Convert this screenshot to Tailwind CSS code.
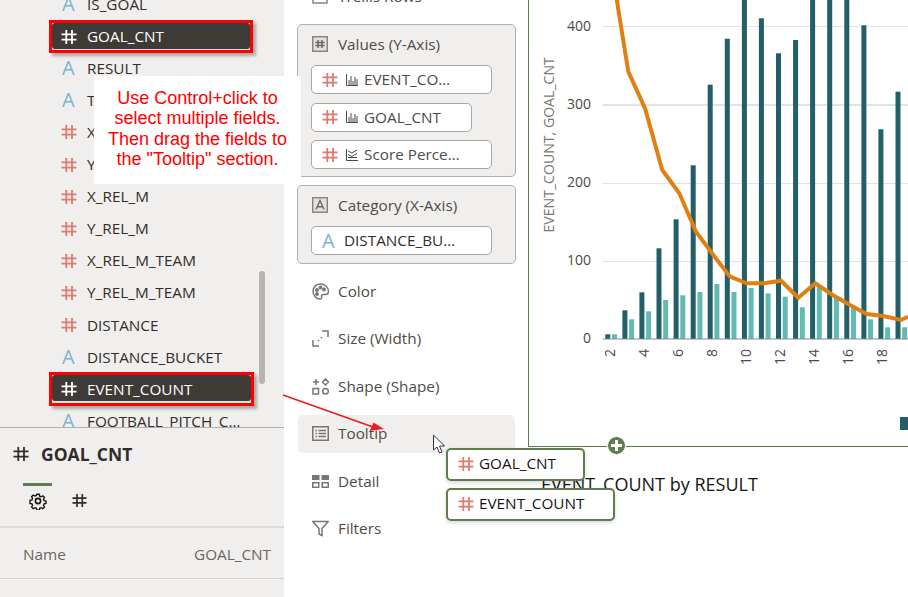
<!DOCTYPE html>
<html>
<head>
<meta charset="utf-8">
<script src="https://cdn.jsdelivr.net/npm/@tailwindcss/browser@4"></script>
</head>
<body class="overflow-hidden bg-white">
<svg width="0" height="0" class="absolute">
  <symbol id="h" viewBox="0 0 16 16"><path d="M5.300 1v14M11 1v14M0.500 5.400h15M0.500 10.600h15" fill="none" stroke="currentColor" stroke-width="1.800"/></symbol>
  <symbol id="bars" viewBox="0 0 12 12"><path d="M0.500 0v11.500h11.500M3 11V6M5 11V2M7 11V7M9 11V3M11 11V5" fill="none" stroke="currentColor" stroke-width="1"/></symbol>
  <symbol id="combo" viewBox="0 0 12 12"><path d="M0.500 0v11.500h11.500M2 2l4 2 5-3M2 5.500l4 2 5-3M2 8.500h9" fill="none" stroke="currentColor" stroke-width="1"/></symbol>
</svg>
<div class="relative flex h-[597px] w-[908px] overflow-hidden font-['Open_Sans',sans-serif] text-[15.300px] text-[#312d2a]">

  <!-- Left data panel -->
  <aside class="flex h-full w-[284px] shrink-0 flex-col bg-[#f1efed]">
    <div class="relative h-[428px] shrink-0 overflow-hidden border-b border-[#b3afab]">
      <ul class="-mt-3">
        <li class="flex h-[32.100px] items-center pl-[61px]"><span class="w-[26px] pl-[1px] text-[20px] leading-none font-normal text-[#7fb2cf]">A</span>IS_GOAL</li>
        <li class="flex h-[32.100px] items-center">
          <div class="ml-[49px] h-[33px] w-[204px] border-3 border-[#ff0000] bg-[#e4e2df] shadow-[3px_3px_3px_rgba(0,0,0,0.3)]">
            <div class="flex h-[26px] items-center rounded-[3px] bg-[#3e3a35] pt-[2px] pl-[9px] text-white"><svg class="mr-[10px] h-[16px] w-[16px] text-white"><use href="#h"/></svg>GOAL_CNT</div>
          </div>
        </li>
        <li class="flex h-[32.100px] items-center pl-[61px]"><span class="w-[26px] pl-[1px] text-[20px] leading-none font-normal text-[#7fb2cf]">A</span>RESULT</li>
        <li class="flex h-[32.100px] items-center pl-[61px]"><span class="w-[26px] pl-[1px] text-[20px] leading-none font-normal text-[#7fb2cf]">A</span>TEAM</li>
        <li class="flex h-[32.100px] items-center pl-[61px]"><svg class="mr-[10px] h-[16px] w-[16px] text-[#e0796b]"><use href="#h"/></svg>X_REL</li>
        <li class="flex h-[32.100px] items-center pl-[61px]"><svg class="mr-[10px] h-[16px] w-[16px] text-[#e0796b]"><use href="#h"/></svg>Y_REL</li>
        <li class="flex h-[32.100px] items-center pl-[61px]"><svg class="mr-[10px] h-[16px] w-[16px] text-[#e0796b]"><use href="#h"/></svg>X_REL_M</li>
        <li class="flex h-[32.100px] items-center pl-[61px]"><svg class="mr-[10px] h-[16px] w-[16px] text-[#e0796b]"><use href="#h"/></svg>Y_REL_M</li>
        <li class="flex h-[32.100px] items-center pl-[61px]"><svg class="mr-[10px] h-[16px] w-[16px] text-[#e0796b]"><use href="#h"/></svg>X_REL_M_TEAM</li>
        <li class="flex h-[32.100px] items-center pl-[61px]"><svg class="mr-[10px] h-[16px] w-[16px] text-[#e0796b]"><use href="#h"/></svg>Y_REL_M_TEAM</li>
        <li class="flex h-[32.100px] items-center pl-[61px]"><svg class="mr-[10px] h-[16px] w-[16px] text-[#e0796b]"><use href="#h"/></svg>DISTANCE</li>
        <li class="flex h-[32.100px] items-center pl-[61px]"><span class="w-[26px] pl-[1px] text-[20px] leading-none font-normal text-[#7fb2cf]">A</span>DISTANCE_BUCKET</li>
        <li class="flex h-[32.100px] items-center">
          <div class="ml-[49px] h-[34px] w-[205px] border-3 border-[#ff0000] bg-[#e4e2df] shadow-[3px_3px_3px_rgba(0,0,0,0.3)]">
            <div class="flex h-[26px] items-center rounded-[3px] bg-[#3e3a35] pt-[2px] pl-[9px] text-white"><svg class="mr-[10px] h-[16px] w-[16px] text-white"><use href="#h"/></svg>EVENT_COUNT</div>
          </div>
        </li>
        <li class="flex h-[32.100px] items-center whitespace-nowrap pl-[61px]"><span class="w-[26px] pl-[1px] text-[20px] leading-none font-normal text-[#7fb2cf]">A</span>FOOTBALL_PITCH_C<span class="tracking-[2px]">…</span></li>
      </ul>
      <div class="absolute top-[271px] left-[259px] h-[113px] w-[6px] rounded-full bg-[#b9b4af]"></div>
    </div>
    <div class="flex h-[44px] items-center pt-[8px] pl-[13px] text-[17.500px] font-bold">
      <svg class="mr-[12px] h-[16px] w-[16px] text-[#312d2a]"><use href="#h"/></svg>GOAL_CNT
    </div>
    <div class="ml-[23px] mt-[11px] h-[3px] w-[29px] bg-[#5f7d4f]"></div>
    <div class="flex h-[42px] items-start border-b-2 border-[#dcd9d6]">
      <svg class="mt-[6px] ml-[29px] h-[18px] w-[18px]" viewBox="0 0 18 18" fill="none" stroke="#161513" stroke-width="1.600"><circle cx="9" cy="9" r="2.600"/><path d="M7.600 1.200h2.800l.5 2.200 1.600.7 2-1.100 1.900 2-1.100 1.900.7 1.600 2.200.5v2.800l-2.200.5-.7 1.600 1.100 2-2 1.900-1.900-1.100-1.600.7-.5 2.200H7.600l-.5-2.200-1.600-.7-2 1.100-1.900-2 1.100-1.900-.7-1.600-2.200-.5V8.100l2.200-.5.7-1.600-1.100-2 2-1.900 1.900 1.100 1.600-.7z" transform="translate(1.200 1.200) scale(.87)"/></svg>
      <svg class="mt-[7px] ml-[25px] h-[15px] w-[15px] text-[#312d2a]"><use href="#h"/></svg>
    </div>
    <div class="flex h-[51px] items-center justify-between border-b border-[#d5d2cf] pt-[3px] pr-[13px] pl-[23px] text-[#6b6660]">
      <span>Name</span><span>GOAL_CNT</span>
    </div>
  </aside>

  <!-- Middle grammar panel -->
  <section class="flex w-[244px] shrink-0 flex-col pl-[13px] pr-[12px] text-[#4f4b47]">
    <div class="-mt-[16px] mb-[16px] flex h-[24px] items-center pl-[15px]">
      <svg class="mr-[10px] h-[16px] w-[16px]" viewBox="0 0 16 16" fill="none" stroke="#8a8580" stroke-width="1.500"><rect x="1" y="1" width="14" height="14"/><path d="M1 8h14"/></svg>Trellis Rows
    </div>
    <div class="flex h-[153px] flex-col rounded-[5px] border border-[#b3afab] bg-[#f1efed] pt-[8px] pl-[13px]">
      <div class="mb-[10px] flex h-[22px] items-center pl-[1px]">
        <svg class="mr-[10px] h-[16px] w-[16px]" viewBox="0 0 16 16" fill="none"><rect x=".75" y=".75" width="14.500" height="14.500" fill="#e4e1de" stroke="#8a8580" stroke-width="1.500"/><path d="M6 4v8M10 4v8M3.500 6.500h9M3.500 9.500h9" stroke="#6b6660" stroke-width="1.400"/></svg>Values (Y-Axis)
      </div>
      <div class="flex flex-col gap-[8.500px]">
        <div class="flex h-[29px] w-[181px] items-center rounded-[5px] border border-[#aaa6a1] bg-white pl-[10px]"><svg class="mr-[8px] h-[16px] w-[16px] text-[#e0796b]"><use href="#h"/></svg><svg class="mr-[6px] h-[12px] w-[12px]"><use href="#bars"/></svg>EVENT_CO…</div>
        <div class="flex h-[29px] w-[161px] items-center rounded-[5px] border border-[#aaa6a1] bg-white pl-[10px]"><svg class="mr-[8px] h-[16px] w-[16px] text-[#e0796b]"><use href="#h"/></svg><svg class="mr-[6px] h-[12px] w-[12px]"><use href="#bars"/></svg>GOAL_CNT</div>
        <div class="flex h-[29px] w-[181px] items-center rounded-[5px] border border-[#aaa6a1] bg-white pl-[10px]"><svg class="mr-[8px] h-[16px] w-[16px] text-[#e0796b]"><use href="#h"/></svg><svg class="mr-[6px] h-[12px] w-[12px]"><use href="#combo"/></svg>Score Perce…</div>
      </div>
    </div>
    <div class="mt-[8px] flex h-[79px] flex-col rounded-[5px] border border-[#b3afab] bg-[#f1efed] pt-[8px] pl-[13px]">
      <div class="mb-[10px] flex h-[22px] items-center pl-[1px]">
        <svg class="mr-[10px] h-[16px] w-[16px]" viewBox="0 0 16 16" fill="none"><rect x=".75" y=".75" width="14.500" height="14.500" fill="#e4e1de" stroke="#8a8580" stroke-width="1.500"/><path d="M4 12.500 8 3.500l4 9M5.300 9.800h5.400" stroke="#6b6660" stroke-width="1.400"/></svg>Category (X-Axis)
      </div>
      <div class="flex h-[29px] w-[181px] items-center rounded-[5px] border border-[#aaa6a1] bg-white pl-[10px] text-[#312d2a]"><span class="w-[22px] text-[20px] leading-none font-normal text-[#7fb2cf]">A</span>DISTANCE_BU…</div>
    </div>
    <div class="mt-[9px] flex flex-col gap-[9.330px] pl-[1px]">
      <div class="flex h-[38px] w-[217px] items-center pb-[1px] pl-[14px]">
        <svg class="mr-[9px] h-[17px] w-[17px]" viewBox="0 0 17 17" fill="none" stroke="#7a7570" stroke-width="1.500"><path d="M8.500 1C4.200 1 1 4.200 1 8.300s3.300 7.700 7 7.700c1.600 0 2-1 1.600-2.200-.4-1.300.2-2.300 1.600-2.300h2.300c1.700 0 3-1.100 3-3C16 4 12.700 1 8.500 1z"/><circle cx="5" cy="7" r="1.200" fill="#7a7570"/><circle cx="8.500" cy="4.500" r="1.200" fill="#7a7570"/><circle cx="12" cy="6.500" r="1.200" fill="#7a7570"/><circle cx="5" cy="11" r="1.200" fill="#7a7570"/></svg>Color
      </div>
      <div class="flex h-[38px] w-[217px] items-center pb-[1px] pl-[14px]">
        <svg class="mr-[9px] h-[17px] w-[17px]" viewBox="0 0 17 17" fill="none" stroke="#7a7570" stroke-width="1.500"><path d="M1 10v6h6M10 1h6v6" /><path d="M6 11l5-5" stroke-dasharray="1.500 2.500"/></svg>Size (Width)
      </div>
      <div class="flex h-[38px] w-[217px] items-center pb-[1px] pl-[14px]">
        <svg class="mr-[9px] h-[17px] w-[17px]" viewBox="0 0 17 17" fill="none" stroke="#7a7570" stroke-width="1.500"><path d="M1 4h6M4 1v6M13.500 1l3 3-3 3-3-3z"/><rect x="1" y="10.500" width="5.500" height="5.500"/><circle cx="13.500" cy="13.200" r="2.800"/></svg>Shape (Shape)
      </div>
      <div class="flex h-[38px] w-[217px] items-center rounded-[5px] bg-[#f1efed] pb-[1px] pl-[14px]">
        <svg class="mr-[9px] h-[17px] w-[17px]" viewBox="0 0 17 17" fill="none" stroke="#7a7570" stroke-width="1.500"><rect x=".75" y="1.750" width="15.500" height="13.500"/><path d="M3.500 5.500h1.500M6.500 5.500h7.500M3.500 8.500h1.500M6.500 8.500h7.500M3.500 11.500h1.500M6.500 11.500h7.500"/></svg>Tooltip
      </div>
      <div class="flex h-[38px] w-[217px] items-center pl-[14px]">
        <svg class="mr-[9px] h-[17px] w-[17px]" viewBox="0 0 17 17"><path d="M0 2h7.500v5H0zM9.500 2H17v5H9.500z" fill="#7a7570"/><path d="M.75 9.750h6v4.500h-6zM10.250 9.750h6v4.500h-6z" fill="none" stroke="#7a7570" stroke-width="1.500"/></svg>Detail
      </div>
      <div class="flex h-[38px] w-[217px] items-center pb-[1px] pl-[14px]">
        <svg class="mr-[9px] h-[17px] w-[17px]" viewBox="0 0 17 17" fill="none" stroke="#7a7570" stroke-width="1.500"><path d="M.75 1.500h15.500L10 8.500v7l-3-1.500V8.500z"/></svg>Filters
      </div>
    </div>
  </section>

  <!-- Chart canvas -->
  <section class="flex min-w-0 flex-1 flex-col">
    <div class="h-[447px] shrink-0 border-b border-l border-[#5f7d4f]">
      <svg class="block h-[446px] w-[379px]" viewBox="529 0 379 446" font-family="Open Sans">
        <path d="M603 26.500H908M603 183.500H908M603 261.500H908" stroke="#dfe3e6" stroke-width="1"/>
        <path d="M603 105H908" stroke="#dfe3e6" stroke-width="2"/>
        <g fill="#225f68">
          <rect x="605.300" y="334.300" width="5" height="4.700"/><rect x="622.400" y="310.300" width="5" height="28.700"/><rect x="639.400" y="292.300" width="5" height="46.700"/><rect x="656.500" y="248.300" width="5" height="90.700"/><rect x="673.600" y="219.300" width="5" height="119.700"/><rect x="690.700" y="165.300" width="5" height="173.700"/><rect x="707.700" y="84.700" width="5" height="254.300"/><rect x="724.800" y="38.700" width="5" height="300.300"/><rect x="741.900" y="0" width="5" height="339"/><rect x="758.900" y="18.300" width="5" height="320.700"/><rect x="776" y="53.300" width="5" height="285.700"/><rect x="793.100" y="40" width="5" height="299"/><rect x="810.100" y="0" width="5" height="339"/><rect x="827.200" y="0" width="5" height="339"/><rect x="844.300" y="0" width="5" height="339"/><rect x="861.400" y="25.300" width="5" height="313.700"/><rect x="878.400" y="129.300" width="5" height="209.700"/><rect x="895.500" y="91.700" width="5" height="247.300"/>
        </g>
        <g fill="#62bab3">
          <rect x="612" y="334.300" width="5" height="4.700"/><rect x="629.100" y="319.300" width="5" height="19.700"/><rect x="646.100" y="311.300" width="5" height="27.700"/><rect x="663.200" y="300" width="5" height="39"/><rect x="680.300" y="295.300" width="5" height="43.700"/><rect x="697.400" y="292" width="5" height="47"/><rect x="714.400" y="284" width="5" height="55"/><rect x="731.500" y="292" width="5" height="47"/><rect x="748.600" y="288" width="5" height="51"/><rect x="765.600" y="293.300" width="5" height="45.700"/><rect x="782.700" y="296.700" width="5" height="42.300"/><rect x="799.800" y="307.300" width="5" height="31.700"/><rect x="816.800" y="285" width="5" height="54"/><rect x="833.900" y="298" width="5" height="41"/><rect x="851" y="308" width="5" height="31"/><rect x="868.100" y="319.300" width="5" height="19.700"/><rect x="885.100" y="327.300" width="5" height="11.700"/><rect x="902.200" y="327.300" width="5" height="11.700"/>
        </g>
        <path d="M603 339H908" stroke="#7f9092" stroke-width="1"/>
        <polyline fill="none" stroke="#e07f12" stroke-width="4" stroke-linejoin="miter" points="616,-5 628.300,71.700 645,108.300 662.300,170 679.300,193.300 696,231.700 713.300,255 730,276.700 746.700,283.300 764,283.300 781,280.700 798.300,297.700 815.300,283.300 832.700,295 850,305 866.700,314 883.300,316 900.700,320 908,316.700"/>
        <g font-size="14" fill="#4a4a48" text-anchor="end">
          <text x="591" y="31">400</text><text x="591" y="109">300</text><text x="591" y="187">200</text><text x="591" y="265">100</text><text x="591" y="343">0</text>
        </g>
        <text transform="translate(554 232.500) rotate(-90)" font-size="14.100" fill="#7a7a75">EVENT_COUNT, GOAL_CNT</text>
        <g font-size="14" fill="#4a4a48" text-anchor="end">
          <text transform="translate(615 349) rotate(-90)">2</text><text transform="translate(649 349) rotate(-90)">4</text><text transform="translate(683 349) rotate(-90)">6</text><text transform="translate(717 349) rotate(-90)">8</text><text transform="translate(751 349) rotate(-90)">10</text><text transform="translate(785 349) rotate(-90)">12</text><text transform="translate(819 349) rotate(-90)">14</text><text transform="translate(853 349) rotate(-90)">16</text><text transform="translate(887 349) rotate(-90)">18</text>
        </g>
        <rect x="900" y="417" width="8" height="13" fill="#225f68"/>
      </svg>
    </div>
    <h2 class="mt-[23px] pl-[13px] text-[18px] leading-[28px] font-normal whitespace-nowrap text-[#161513]">EVENT_COUNT by RESULT</h2>
  </section>

  <!-- Overlays -->
  <div class="absolute top-[436px] left-[607px] flex h-[19px] w-[19px] items-center justify-center rounded-full border border-white bg-[#5f7d4f]">
    <svg class="h-[11px] w-[11px]" viewBox="0 0 11 11"><path d="M5.500 0v11M0 5.500h11" stroke="#fff" stroke-width="3"/></svg>
  </div>
  <div class="absolute top-[76px] left-[94px] flex h-[108px] w-[207px] flex-col items-center bg-white pt-[12px] font-['Liberation_Sans',sans-serif] text-[18px] leading-[20.300px] text-[#ff0000]">
    <p class="text-center">Use Control+click to<br>select multiple fields.<br>Then drag the fields to<br>the "Tooltip" section.</p>
  </div>
  <div class="absolute top-[448px] left-[446px] flex h-[33px] w-[139px] items-center rounded-[5px] border-2 border-[#5f7d4f] bg-white pb-[2px] pl-[10px] text-[#161513] shadow-[0_2px_4px_rgba(0,0,0,0.15)]"><svg class="mr-[5px] h-[16px] w-[16px] text-[#e0796b]"><use href="#h"/></svg>GOAL_CNT</div>
  <div class="absolute top-[488px] left-[446px] flex h-[33px] w-[169px] items-center rounded-[5px] border-2 border-[#5f7d4f] bg-white pb-[2px] pl-[10px] text-[#161513] shadow-[0_2px_4px_rgba(0,0,0,0.15)]"><svg class="mr-[5px] h-[16px] w-[16px] text-[#e0796b]"><use href="#h"/></svg>EVENT_COUNT</div>
  <svg class="pointer-events-none absolute top-0 left-0 h-[597px] w-[908px]" viewBox="0 0 908 597">
    <path d="M283 395 373 427" stroke="#ee1c25" stroke-width="1.800" fill="none"/>
    <path d="M384 429 370 430.800 373.500 422.500z" fill="#ee1c25"/>
    <path d="M433.500 435v15l3.500-3 2.500 6 2.500-1-2.500-6h5z" fill="#fff" stroke="#333" stroke-width="1"/>
  </svg>
</div>
</body>
</html>
